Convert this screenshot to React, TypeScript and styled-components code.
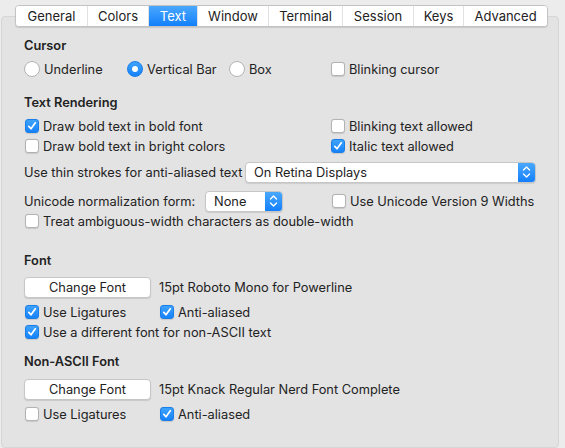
import { createGlobalStyle, styled } from 'styled-components';

const GlobalStyle = createGlobalStyle`
  html, body {
    margin: 0;
    padding: 0;
    background: #ececec;
    font-family: Inter, 'Liberation Sans', Arial, sans-serif;
    font-size: 12.8px;
    color: #222;
  }
`;

const tabs: [string, number][] = [
  ['General', 71],
  ['Colors', 61],
  ['Text', 49],
  ['Window', 71],
  ['Terminal', 74],
  ['Session', 71],
  ['Keys', 50],
  ['Advanced', 84],
];

function Check({ checked }: { checked?: boolean }) {
  return (
    <CheckBox $checked={checked}>
      {checked && (
        <svg width="10" height="10" viewBox="0 0 10 10">
          <path d="M1.8 5.4 L4 7.8 L8.3 1.8" fill="none" stroke="#fff" strokeWidth="1.7" strokeLinecap="round" strokeLinejoin="round" />
        </svg>
      )}
    </CheckBox>
  );
}

function CheckItem({ label, checked, col }: { label: string; checked?: boolean; col?: number }) {
  return (
    <Item $w={col}>
      <Check checked={checked} />
      <span>{label}</span>
    </Item>
  );
}

function Radio({ label, on, width }: { label: string; on?: boolean; width: number }) {
  return (
    <RadioItem $w={width}>
      <RadioDot $on={on} />
      <span>{label}</span>
    </RadioItem>
  );
}

function Popup({ value, width }: { value: string; width: number }) {
  return (
    <Select $w={width}>
      <span>{value}</span>
      <Stepper>
        <svg width="9" height="14" viewBox="0 0 9 14">
          <path d="M1.5 5 L4.5 2 L7.5 5 M1.5 9 L4.5 12 L7.5 9" fill="none" stroke="#fff" strokeWidth="1.4" strokeLinecap="round" strokeLinejoin="round" />
        </svg>
      </Stepper>
    </Select>
  );
}

export default function App() {
  return (
    <Window>
      <GlobalStyle />
      <TabBar>
        {tabs.map(([t, w]) => (
          <Tab key={t} $w={w} $active={t === 'Text'}>
            {t}
          </Tab>
        ))}
      </TabBar>
      <Panel>
        <Title $mt={19}>Cursor</Title>
        <Row $mt={3}>
          <Radio label="Underline" width={103} />
          <Radio label="Vertical Bar" on width={102} />
          <Radio label="Box" width={101} />
          <CheckItem label="Blinking cursor" />
        </Row>

        <Title $mt={14}>Text Rendering</Title>
        <Row $mt={3}>
          <CheckItem label="Draw bold text in bold font" checked col={306} />
          <CheckItem label="Blinking text allowed" />
        </Row>
        <Row>
          <CheckItem label="Draw bold text in bright colors" col={306} />
          <CheckItem label="Italic text allowed" checked />
        </Row>
        <Row $mt={6}>
          <Label $w={224}>Use thin strokes for anti-aliased text</Label>
          <Popup value="On Retina Displays" width={295} />
        </Row>
        <Row $mt={9}>
          <Label $w={181}>Unicode normalization form:</Label>
          <Popup value="None" width={78} />
          <Spacer $w={48} />
          <CheckItem label="Use Unicode Version 9 Widths" />
        </Row>
        <Row>
          <CheckItem label="Treat ambiguous-width characters as double-width" />
        </Row>

        <Title $mt={20}>Font</Title>
        <Row $mt={6}>
          <PushButton>Change Font</PushButton>
          <FontName>15pt Roboto Mono for Powerline</FontName>
        </Row>
        <Row $mt={5}>
          <CheckItem label="Use Ligatures" checked col={135} />
          <CheckItem label="Anti-aliased" checked />
        </Row>
        <Row>
          <CheckItem label="Use a different font for non-ASCII text" checked />
        </Row>

        <Title $mt={10}>Non-ASCII Font</Title>
        <Row $mt={7}>
          <PushButton>Change Font</PushButton>
          <FontName>15pt Knack Regular Nerd Font Complete</FontName>
        </Row>
        <Row $mt={5}>
          <CheckItem label="Use Ligatures" col={135} />
          <CheckItem label="Anti-aliased" checked />
        </Row>
      </Panel>
    </Window>
  );
}

const Window = styled.div`
  position: relative;
  width: 565px;
  height: 448px;
  overflow: hidden;
`;

const TabBar = styled.div`
  position: absolute;
  top: 5px;
  left: 15px;
  z-index: 2;
  display: flex;
  height: 20px;
  background: #fff;
  border: 1px solid #c3c3c3;
  border-radius: 4px;
  box-shadow: 0 1px 1px rgba(0, 0, 0, 0.12);
  overflow: hidden;
`;

const Tab = styled.div<{ $active?: boolean; $w: number }>`
  box-sizing: border-box;
  width: ${(p) => p.$w}px;
  display: flex;
  align-items: center;
  justify-content: center;
  font-size: 13px;
  color: ${(p) => (p.$active ? '#fff' : '#222')};
  background: ${(p) => (p.$active ? 'linear-gradient(#4aa8fd, #137ffb)' : '#fff')};
  & + & {
    border-left: 1px solid #e2e2e2;
  }
`;

const Panel = styled.div`
  margin: 16px 0 0 1px;
  width: 558px;
  height: 432px;
  box-sizing: border-box;
  padding: 0 22px;
  background: #e3e3e3;
  border: 1px solid #d6d6d6;
  border-radius: 4px;
  display: flex;
  flex-direction: column;
`;

const Title = styled.div<{ $mt?: number }>`
  margin-top: ${(p) => p.$mt ?? 0}px;
  height: 20px;
  line-height: 20px;
  font-weight: 600;
`;

const Row = styled.div<{ $mt?: number }>`
  margin-top: ${(p) => p.$mt ?? 0}px;
  height: 20px;
  display: flex;
  align-items: center;
`;

const Item = styled.div<{ $w?: number }>`
  display: flex;
  align-items: center;
  gap: 4px;
  white-space: nowrap;
  ${(p) => (p.$w ? `width: ${p.$w}px;` : '')}
`;

const CheckBox = styled.span<{ $checked?: boolean }>`
  box-sizing: border-box;
  width: 14px;
  height: 14px;
  margin-left: 1px;
  border-radius: 3px;
  display: inline-flex;
  align-items: center;
  justify-content: center;
  background: ${(p) => (p.$checked ? 'linear-gradient(#3ea3fd, #1682fb)' : '#fff')};
  border: 1px solid ${(p) => (p.$checked ? '#1a7ee8' : '#b3b3b3')};
  box-shadow: 0 0.5px 1px rgba(0, 0, 0, 0.12);
`;

const RadioItem = styled.div<{ $w: number }>`
  width: ${(p) => p.$w}px;
  display: flex;
  align-items: center;
  gap: 4px;
  white-space: nowrap;
`;

const RadioDot = styled.span<{ $on?: boolean }>`
  box-sizing: border-box;
  width: 16px;
  height: 16px;
  border-radius: 50%;
  display: inline-flex;
  align-items: center;
  justify-content: center;
  background: ${(p) => (p.$on ? 'linear-gradient(#3ea3fd, #1682fb)' : '#fff')};
  border: 1px solid ${(p) => (p.$on ? '#1a7ee8' : '#b3b3b3')};
  &::after {
    content: '';
    display: ${(p) => (p.$on ? 'block' : 'none')};
    width: 6px;
    height: 6px;
    border-radius: 50%;
    background: #fff;
  }
`;

const Label = styled.span<{ $w: number }>`
  width: ${(p) => p.$w}px;
  white-space: nowrap;
`;

const Select = styled.div<{ $w: number }>`
  box-sizing: border-box;
  width: ${(p) => p.$w}px;
  height: 21px;
  display: flex;
  align-items: center;
  background: #fff;
  border: 1px solid #c6c6c6;
  border-radius: 4px;
  box-shadow: 0 1px 1px rgba(0, 0, 0, 0.1);
  overflow: hidden;
  span {
    flex: 1;
    padding-left: 8px;
    white-space: nowrap;
  }
`;

const Stepper = styled.div`
  width: 17px;
  height: 100%;
  display: flex;
  align-items: center;
  justify-content: center;
  background: linear-gradient(#4aa8fd, #137ffb);
`;

const Spacer = styled.div<{ $w: number }>`
  width: ${(p) => p.$w}px;
`;

const PushButton = styled.div`
  box-sizing: border-box;
  width: 127px;
  height: 21px;
  display: flex;
  align-items: center;
  justify-content: center;
  background: #fff;
  border: 1px solid #c6c6c6;
  border-radius: 4px;
  box-shadow: 0 1px 1px rgba(0, 0, 0, 0.12);
`;

const FontName = styled.span`
  margin-left: 8px;
  white-space: nowrap;
`;
